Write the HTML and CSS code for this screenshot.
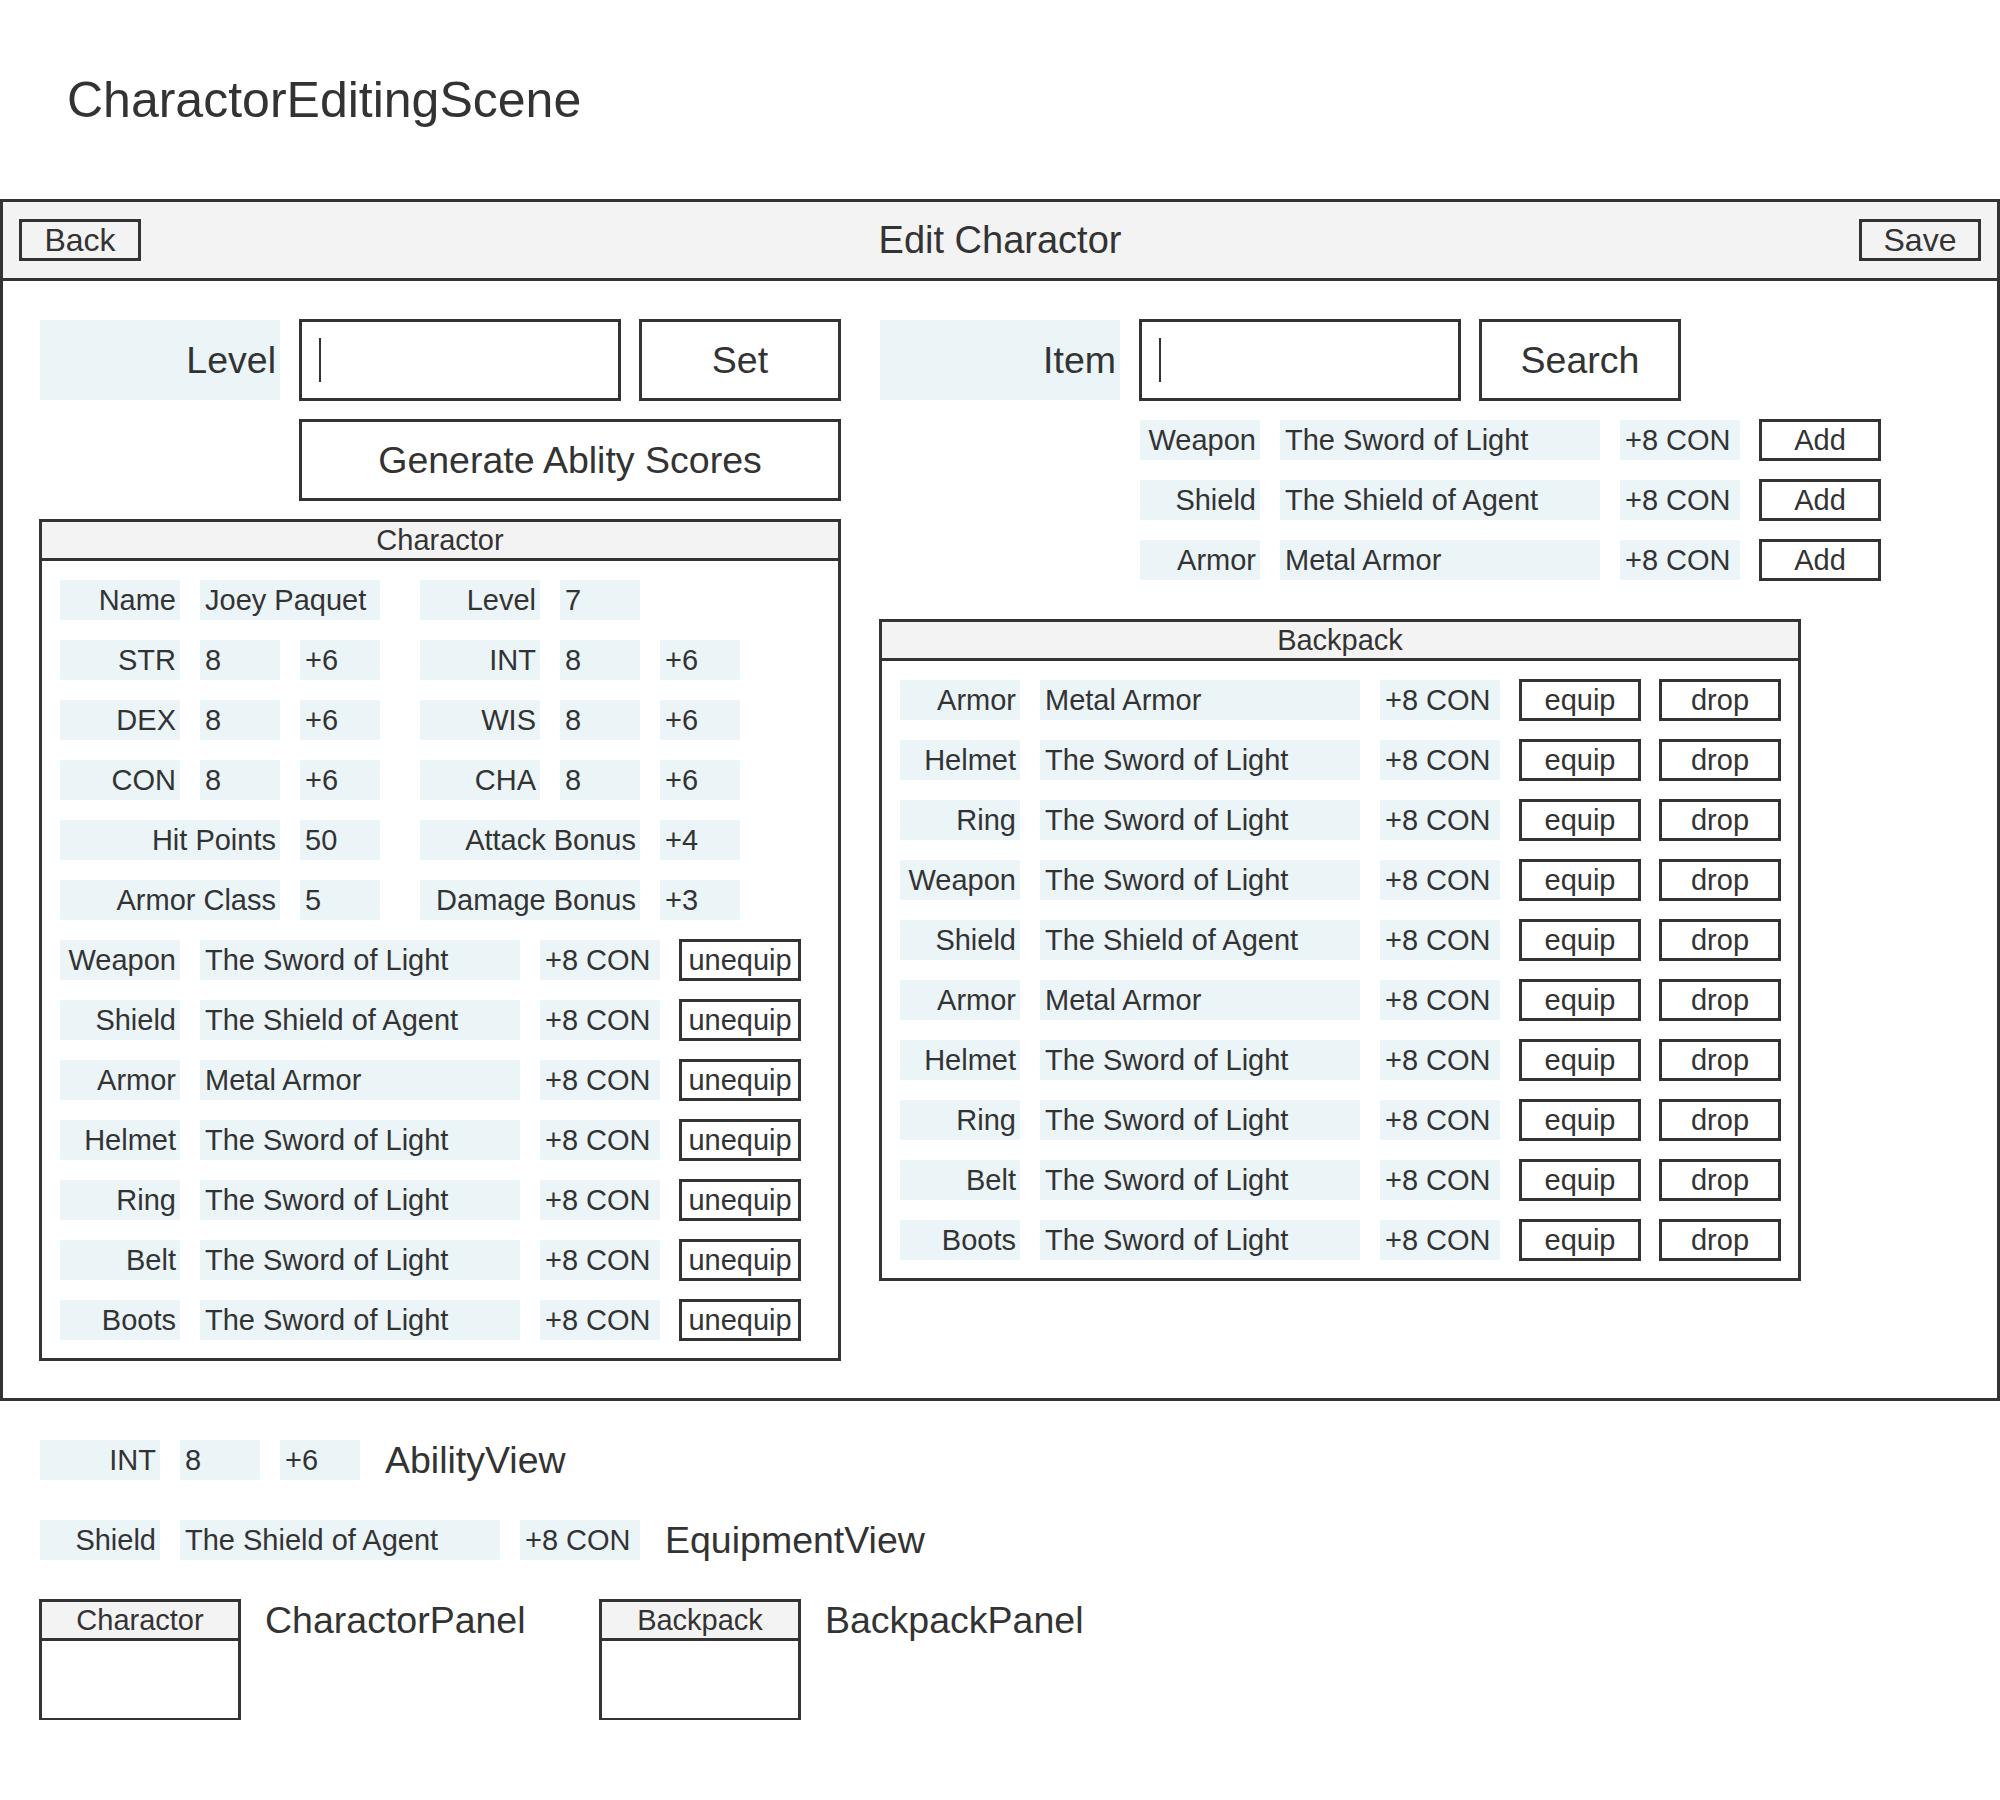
FILE: index.html
```html
<!DOCTYPE html>
<html lang="en">

<head>
    <meta charset="UTF-8">
    <meta name="viewport" content="width=device-width, initial-scale=1.0">
    <title>CharactorEditingScene</title>
    <link rel="stylesheet" href="styles.css">
</head>

<body>

    <h1 class="scene-name">CharactorEditingScene</h1>

    <div class="scene">
        <div class="nav-bar">
            <button class="btn nav-btn">Back</button>
            <div class="nav-title">Edit Charactor</div>
            <button class="btn nav-btn">Save</button>
        </div>

        <div class="scene-body">
            <!-- left side: level + charactor panel -->
            <div class="column left-column">
                <div class="control-row">
                    <div class="field-label">Level</div>
                    <div class="text-field"><span class="caret"></span></div>
                    <button class="btn big-btn">Set</button>
                </div>
                <button class="btn big-btn generate-btn">Generate Ablity Scores</button>

                <div class="panel charactor-panel">
                    <div class="panel-header">Charactor</div>
                    <div class="panel-body">
                        <div class="row">
                            <div class="cell label w120">Name</div>
                            <div class="cell value w180">Joey Paquet</div>
                            <div class="cell label w120 split">Level</div>
                            <div class="cell value w80">7</div>
                        </div>
                        <div class="row">
                            <div class="cell label w120">STR</div>
                            <div class="cell value w80">8</div>
                            <div class="cell value w80">+6</div>
                            <div class="cell label w120 split">INT</div>
                            <div class="cell value w80">8</div>
                            <div class="cell value w80">+6</div>
                        </div>
                        <div class="row">
                            <div class="cell label w120">DEX</div>
                            <div class="cell value w80">8</div>
                            <div class="cell value w80">+6</div>
                            <div class="cell label w120 split">WIS</div>
                            <div class="cell value w80">8</div>
                            <div class="cell value w80">+6</div>
                        </div>
                        <div class="row">
                            <div class="cell label w120">CON</div>
                            <div class="cell value w80">8</div>
                            <div class="cell value w80">+6</div>
                            <div class="cell label w120 split">CHA</div>
                            <div class="cell value w80">8</div>
                            <div class="cell value w80">+6</div>
                        </div>
                        <div class="row">
                            <div class="cell label w220">Hit Points</div>
                            <div class="cell value w80">50</div>
                            <div class="cell label w220 split">Attack Bonus</div>
                            <div class="cell value w80">+4</div>
                        </div>
                        <div class="row">
                            <div class="cell label w220">Armor Class</div>
                            <div class="cell value w80">5</div>
                            <div class="cell label w220 split">Damage Bonus</div>
                            <div class="cell value w80">+3</div>
                        </div>

                        <div class="row">
                            <div class="cell label w120">Weapon</div>
                            <div class="cell value w320">The Sword of Light</div>
                            <div class="cell value w120">+8 CON</div>
                            <button class="btn small-btn">unequip</button>
                        </div>
                        <div class="row">
                            <div class="cell label w120">Shield</div>
                            <div class="cell value w320">The Shield of Agent</div>
                            <div class="cell value w120">+8 CON</div>
                            <button class="btn small-btn">unequip</button>
                        </div>
                        <div class="row">
                            <div class="cell label w120">Armor</div>
                            <div class="cell value w320">Metal Armor</div>
                            <div class="cell value w120">+8 CON</div>
                            <button class="btn small-btn">unequip</button>
                        </div>
                        <div class="row">
                            <div class="cell label w120">Helmet</div>
                            <div class="cell value w320">The Sword of Light</div>
                            <div class="cell value w120">+8 CON</div>
                            <button class="btn small-btn">unequip</button>
                        </div>
                        <div class="row">
                            <div class="cell label w120">Ring</div>
                            <div class="cell value w320">The Sword of Light</div>
                            <div class="cell value w120">+8 CON</div>
                            <button class="btn small-btn">unequip</button>
                        </div>
                        <div class="row">
                            <div class="cell label w120">Belt</div>
                            <div class="cell value w320">The Sword of Light</div>
                            <div class="cell value w120">+8 CON</div>
                            <button class="btn small-btn">unequip</button>
                        </div>
                        <div class="row">
                            <div class="cell label w120">Boots</div>
                            <div class="cell value w320">The Sword of Light</div>
                            <div class="cell value w120">+8 CON</div>
                            <button class="btn small-btn">unequip</button>
                        </div>
                    </div>
                </div>
            </div>

            <!-- right side: item search + backpack -->
            <div class="column right-column">
                <div class="control-row">
                    <div class="field-label">Item</div>
                    <div class="text-field"><span class="caret"></span></div>
                    <button class="btn big-btn">Search</button>
                </div>

                <div class="search-results">
                    <div class="row">
                        <div class="cell label w120">Weapon</div>
                        <div class="cell value w320">The Sword of Light</div>
                        <div class="cell value w120">+8 CON</div>
                        <button class="btn small-btn">Add</button>
                    </div>
                    <div class="row">
                        <div class="cell label w120">Shield</div>
                        <div class="cell value w320">The Shield of Agent</div>
                        <div class="cell value w120">+8 CON</div>
                        <button class="btn small-btn">Add</button>
                    </div>
                    <div class="row">
                        <div class="cell label w120">Armor</div>
                        <div class="cell value w320">Metal Armor</div>
                        <div class="cell value w120">+8 CON</div>
                        <button class="btn small-btn">Add</button>
                    </div>
                </div>

                <div class="panel backpack-panel">
                    <div class="panel-header">Backpack</div>
                    <div class="panel-body">
                        <div class="row">
                            <div class="cell label w120">Armor</div>
                            <div class="cell value w320">Metal Armor</div>
                            <div class="cell value w120">+8 CON</div>
                            <button class="btn small-btn">equip</button>
                            <button class="btn small-btn">drop</button>
                        </div>
                        <div class="row">
                            <div class="cell label w120">Helmet</div>
                            <div class="cell value w320">The Sword of Light</div>
                            <div class="cell value w120">+8 CON</div>
                            <button class="btn small-btn">equip</button>
                            <button class="btn small-btn">drop</button>
                        </div>
                        <div class="row">
                            <div class="cell label w120">Ring</div>
                            <div class="cell value w320">The Sword of Light</div>
                            <div class="cell value w120">+8 CON</div>
                            <button class="btn small-btn">equip</button>
                            <button class="btn small-btn">drop</button>
                        </div>
                        <div class="row">
                            <div class="cell label w120">Weapon</div>
                            <div class="cell value w320">The Sword of Light</div>
                            <div class="cell value w120">+8 CON</div>
                            <button class="btn small-btn">equip</button>
                            <button class="btn small-btn">drop</button>
                        </div>
                        <div class="row">
                            <div class="cell label w120">Shield</div>
                            <div class="cell value w320">The Shield of Agent</div>
                            <div class="cell value w120">+8 CON</div>
                            <button class="btn small-btn">equip</button>
                            <button class="btn small-btn">drop</button>
                        </div>
                        <div class="row">
                            <div class="cell label w120">Armor</div>
                            <div class="cell value w320">Metal Armor</div>
                            <div class="cell value w120">+8 CON</div>
                            <button class="btn small-btn">equip</button>
                            <button class="btn small-btn">drop</button>
                        </div>
                        <div class="row">
                            <div class="cell label w120">Helmet</div>
                            <div class="cell value w320">The Sword of Light</div>
                            <div class="cell value w120">+8 CON</div>
                            <button class="btn small-btn">equip</button>
                            <button class="btn small-btn">drop</button>
                        </div>
                        <div class="row">
                            <div class="cell label w120">Ring</div>
                            <div class="cell value w320">The Sword of Light</div>
                            <div class="cell value w120">+8 CON</div>
                            <button class="btn small-btn">equip</button>
                            <button class="btn small-btn">drop</button>
                        </div>
                        <div class="row">
                            <div class="cell label w120">Belt</div>
                            <div class="cell value w320">The Sword of Light</div>
                            <div class="cell value w120">+8 CON</div>
                            <button class="btn small-btn">equip</button>
                            <button class="btn small-btn">drop</button>
                        </div>
                        <div class="row">
                            <div class="cell label w120">Boots</div>
                            <div class="cell value w320">The Sword of Light</div>
                            <div class="cell value w120">+8 CON</div>
                            <button class="btn small-btn">equip</button>
                            <button class="btn small-btn">drop</button>
                        </div>
                    </div>
                </div>
            </div>
        </div>
    </div>

    <!-- component legend -->
    <div class="legend">
        <div class="row">
            <div class="cell label w120">INT</div>
            <div class="cell value w80">8</div>
            <div class="cell value w80">+6</div>
            <div class="legend-name">AbilityView</div>
        </div>
        <div class="row">
            <div class="cell label w120">Shield</div>
            <div class="cell value w320">The Shield of Agent</div>
            <div class="cell value w120">+8 CON</div>
            <div class="legend-name">EquipmentView</div>
        </div>
        <div class="legend-panels">
            <div class="legend-item first">
                <div class="panel mini-panel">
                    <div class="panel-header">Charactor</div>
                </div>
                <div class="legend-title">CharactorPanel</div>
            </div>
            <div class="legend-item">
                <div class="panel mini-panel">
                    <div class="panel-header">Backpack</div>
                </div>
                <div class="legend-title">BackpackPanel</div>
            </div>
        </div>
    </div>

</body>

</html>
```

FILE: styles.css
```css
body {
    margin: 0;
    font-family: 'Liberation Sans', Arial, sans-serif;
    color: #333;
    background-color: #fff;
}

.scene-name {
    margin: 0 0 69px 0;
    padding: 70px 0 0 67px;
    height: 60px;
    font-size: 50px;
    font-weight: normal;
    line-height: 60px;
}

/* the screen frame */
.scene {
    border: 3px solid #333;
}

.nav-bar {
    display: flex;
    align-items: center;
    justify-content: space-between;
    height: 76px;
    padding: 0 17px;
    background-color: #f3f3f3;
    border-bottom: 3px solid #333;
}

.nav-title {
    font-size: 38px;
}

.scene-body {
    display: flex;
    gap: 40px;
    padding: 39px 0 38px 37px;
}

.column {
    display: flex;
    flex-direction: column;
}

.left-column {
    width: 800px;
}

.right-column {
    width: 920px;
}

/* buttons: 2px border plus 1px shadow, looks like a centered 3px stroke */
.btn {
    box-sizing: border-box;
    padding: 0;
    border: 2px solid #333;
    box-shadow: 0 0 0 1px #333;
    background: transparent;
    color: #333;
    font-family: inherit;
    white-space: nowrap;
}

.nav-btn {
    width: 120px;
    height: 40px;
    font-size: 32px;
}

.big-btn {
    width: 200px;
    height: 80px;
    font-size: 37.5px;
}

.generate-btn {
    width: 540px;
    margin: 20px 0 0 260px;
}

.small-btn {
    flex: none;
    width: 120px;
    height: 40px;
    font-size: 29px;
}

.control-row {
    display: flex;
    gap: 20px;
    height: 80px;
}

.field-label {
    box-sizing: border-box;
    width: 240px;
    height: 80px;
    padding-right: 4px;
    background-color: #ebf4f7;
    font-size: 37.5px;
    line-height: 80px;
    text-align: right;
}

.text-field {
    box-sizing: border-box;
    display: flex;
    align-items: center;
    width: 320px;
    height: 80px;
    padding-left: 17px;
    border: 2px solid #333;
    box-shadow: 0 0 0 1px #333;
}

.caret {
    width: 2px;
    height: 44px;
    background-color: #333;
}

.search-results {
    display: flex;
    flex-direction: column;
    gap: 20px;
    margin: 20px 0 0 260px;
}

/* panels */
.panel {
    box-sizing: border-box;
    border: 2px solid #333;
    box-shadow: 0 0 0 1px #333;
}

.charactor-panel {
    width: 800px;
    margin-top: 20px;
}

.backpack-panel {
    width: 920px;
    margin-top: 40px;
}

.panel-header {
    height: 36px;
    border-bottom: 3px solid #333;
    background-color: #f3f3f3;
    font-size: 29px;
    line-height: 36px;
    text-align: center;
}

.panel-body {
    display: flex;
    flex-direction: column;
    gap: 20px;
    padding: 19px 18px 18px;
}

.row {
    display: flex;
    align-items: center;
    gap: 20px;
    height: 40px;
}

.cell {
    box-sizing: border-box;
    flex: none;
    height: 40px;
    background-color: #ebf4f7;
    font-size: 29px;
    line-height: 40px;
    white-space: nowrap;
}

.cell.label {
    padding-right: 4px;
    text-align: right;
}

.cell.value {
    padding-left: 5px;
}

.split {
    margin-left: 20px;
}

.w80 { width: 80px; }
.w120 { width: 120px; }
.w180 { width: 180px; }
.w220 { width: 220px; }
.w320 { width: 320px; }

/* legend under the screen */
.legend {
    display: flex;
    flex-direction: column;
    gap: 40px;
    padding: 39px 0 0 40px;
}

.legend-name {
    margin-left: 5px;
    font-size: 37.5px;
    line-height: 40px;
}

.legend-panels {
    display: flex;
}

.legend-item {
    display: flex;
    align-items: flex-start;
    gap: 25px;
}

.legend-item.first {
    width: 560px;
}

.mini-panel {
    width: 200px;
    height: 120px;
}

.legend-title {
    font-size: 37.5px;
    line-height: 40px;
}
```
